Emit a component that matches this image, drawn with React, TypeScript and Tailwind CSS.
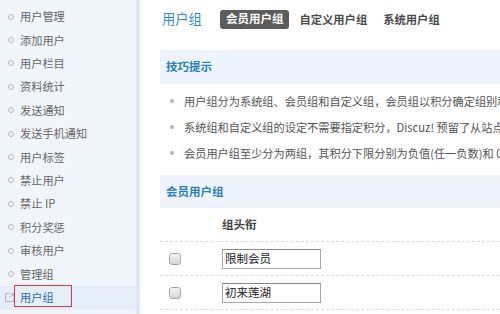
import React from "react";

const menu = [
  "用户管理",
  "添加用户",
  "用户栏目",
  "资料统计",
  "发送通知",
  "发送手机通知",
  "用户标签",
  "禁止用户",
  "禁止 IP",
  "积分奖惩",
  "审核用户",
  "管理组",
];

const tips = [
  "用户组分为系统组、会员组和自定义组，会员组以积分确定组别和权限，而系统组和自定义组是人为设定",
  "系统组和自定义组的设定不需要指定积分，Discuz! 预留了从站点管理员到游客等的 8 个系统头衔",
  "会员用户组至少分为两组，其积分下限分别为负值(任一负数)和 0",
];

const groups = ["限制会员", "初来莲湖"];

export default function App() {
  return (
    <div
      className="flex w-[500px] h-[314px] overflow-hidden bg-white"
      style={{ fontFamily: '"Noto Sans CJK SC", "Noto Sans", sans-serif' }}
    >
      {/* Sidebar */}
      <aside className="w-[140px] shrink-0 bg-[#f1f6fc] border-r-[4px] border-[#dde9f5] pt-[5px]">
        {menu.map((m) => (
          <div key={m} className="flex items-center h-[23.4px] text-[11.2px] text-[#666]">
            <span className="w-[6px] h-[6px] rounded-full border border-[#b9b9b9] ml-[8px] mr-[6px]"></span>
            {m}
          </div>
        ))}
        <div className="relative flex items-center h-[24px] bg-[#e6eff9] text-[11.2px] text-[#2a6cc0]">
          <svg className="ml-[4px] mr-[5px]" width="11" height="11" viewBox="0 0 11 11" fill="none" stroke="#b5b5b5" strokeWidth="1">
            <path d="M5 1.5H1.5v8h8V6" />
            <path d="M6.5 1.5h3v3M9.5 1.5 5.5 5.5" />
          </svg>
          用户组
          <div className="absolute left-[14px] top-[-1px] w-[58px] h-[22px] border border-[#e0393b]"></div>
        </div>
      </aside>

      {/* Main */}
      <main className="flex-1 min-w-0 pl-[20px]">
        <div className="flex items-center h-[38px]">
          <span className="ml-[2px] text-[13.3px] text-[#2f8ccc]">用户组</span>
          <div className="flex items-center gap-[4px] ml-[18px]">
            <span className="h-[19px] flex items-center px-[6px] rounded-[3px] bg-[#5c5c5c] text-white text-[11.5px] font-bold">
              会员用户组
            </span>
            <span className="px-[6px] text-[11.3px] font-bold text-[#4a4a4a]">自定义用户组</span>
            <span className="px-[6px] text-[11.3px] font-bold text-[#4a4a4a]">系统用户组</span>
          </div>
        </div>

        <div className="mt-[12px] h-[34px] bg-[#edf4fb] flex items-center pl-[6px]">
          <span className="text-[11.5px] font-bold text-[#2b7fba]">技巧提示</span>
        </div>

        <ul className="pt-[4px]">
          {tips.map((t) => (
            <li key={t} className="flex items-center h-[26px] whitespace-nowrap text-[11.2px] text-[#555]">
              <span className="w-[4px] h-[4px] rounded-full bg-[#b5b5b5] ml-[10px] mr-[10px] shrink-0"></span>
              {t}
            </li>
          ))}
        </ul>

        <div className="mt-[9px] h-[33px] bg-[#edf4fb] flex items-center pl-[6px]">
          <span className="text-[11.5px] font-bold text-[#2b7fba]">会员用户组</span>
        </div>

        <div className="h-[34px] flex items-center pl-[62px] border-b border-dashed border-[#dcdcdc] text-[11.5px] font-bold text-[#444]">
          组头衔
        </div>
        {groups.map((g) => (
          <div key={g} className="h-[34px] flex items-center border-b border-dashed border-[#dcdcdc]">
            <span className="ml-[9px] w-[12px] h-[12px] rounded-[3px] border border-[#a9a9a9] bg-gradient-to-b from-[#f4f4f4] to-[#d6d6d6]"></span>
            <div className="ml-[41px] w-[99px] h-[20px] border border-[#a8a8a8] border-t-[#8a8a8a] flex items-center px-[2px] text-[11.5px] text-[#222]">
              {g}
            </div>
          </div>
        ))}
      </main>
    </div>
  );
}
